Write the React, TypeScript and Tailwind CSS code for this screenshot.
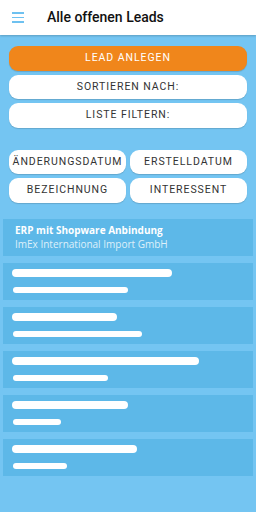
import React from 'react';

const skeletons = [
  { a: 160, b: 115 },
  { a: 105, b: 129 },
  { a: 187, b: 95 },
  { a: 116, b: 48 },
  { a: 125, b: 54 },
];

function PillButton({ label }: { label: string }) {
  return (
    <button className="h-[24.5px] rounded-[9px] bg-white text-[10.5px] tracking-[0.09em] text-[#333] shadow-[0_1px_1px_rgba(0,0,0,0.15)]">
      {label}
    </button>
  );
}

export default function App() {
  return (
    <div className="flex h-[512px] w-[256px] flex-col bg-[#74c5f2]" style={{ fontFamily: 'Roboto, sans-serif' }}>
      <div className="flex h-[35px] items-center bg-white shadow-[0_1px_2px_rgba(0,0,0,0.2)]">
        <div className="ml-[12px] flex w-[12px] flex-col gap-[3px]">
          <span className="h-[1.5px] bg-[#6ec1f0]" />
          <span className="h-[1.5px] bg-[#6ec1f0]" />
          <span className="h-[1.5px] bg-[#6ec1f0]" />
        </div>
        <h1 className="ml-[23px] text-[14px] font-medium text-[#111]">Alle offenen Leads</h1>
      </div>

      <div className="flex flex-col gap-[4px] px-[9px] pt-[11px]">
        <button className="h-[24.5px] rounded-[9px] bg-[#f0861b] text-[10.5px] tracking-[0.09em] text-white shadow-[0_1px_1px_rgba(0,0,0,0.15)]">
          LEAD ANLEGEN
        </button>
        <PillButton label="SORTIEREN NACH:" />
        <PillButton label="LISTE FILTERN:" />
      </div>

      <div className="grid grid-cols-2 gap-x-[4px] gap-y-[4px] px-[9px] pt-[22px]">
        <PillButton label="ÄNDERUNGSDATUM" />
        <PillButton label="ERSTELLDATUM" />
        <PillButton label="BEZEICHNUNG" />
        <PillButton label="INTERESSENT" />
      </div>

      <div className="flex flex-col gap-[7px] px-[3px] pt-[16px]">
        <div className="flex h-[37px] flex-col justify-center bg-[#5db8e8] px-[12px]" style={{ fontFamily: '"Open Sans", sans-serif' }}>
          <div className="text-[10px] font-bold leading-[13px] text-white">ERP mit Shopware Anbindung</div>
          <div className="text-[10px] leading-[14px] text-[#dff0fa]">ImEx International Import GmbH</div>
        </div>
        {skeletons.map((s, i) => (
          <div key={i} className="flex h-[37px] flex-col bg-[#5db8e8] pl-[9px] pt-[6px]">
            <div className="h-[8px] rounded-full bg-white" style={{ width: s.a }} />
            <div className="ml-[1px] mt-[10px] h-[6px] rounded-full bg-white" style={{ width: s.b }} />
          </div>
        ))}
      </div>
    </div>
  );
}
